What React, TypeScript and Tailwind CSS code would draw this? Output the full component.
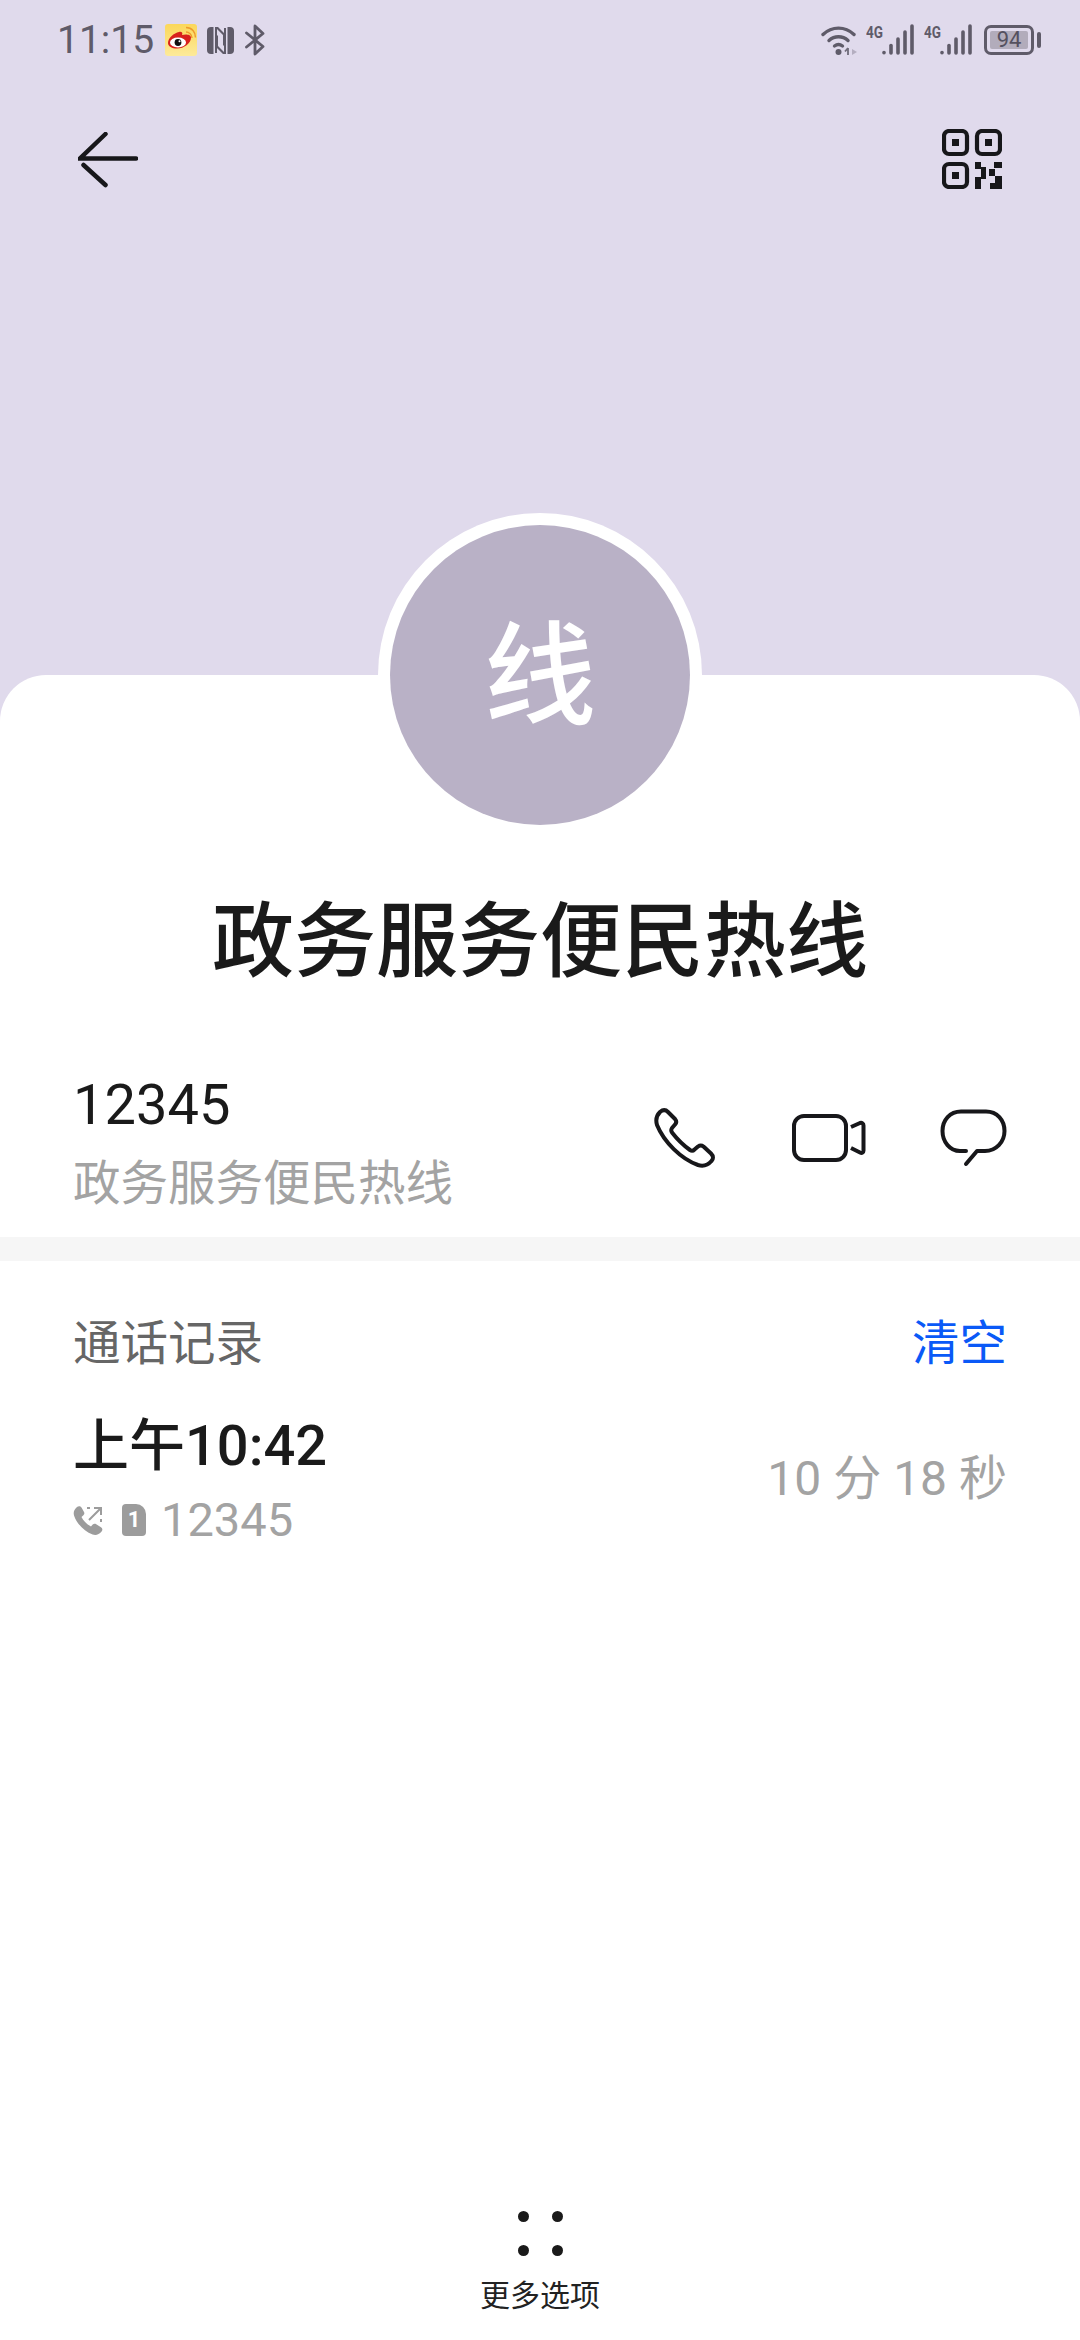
const Bars = () => (
  <svg width="50" height="32" viewBox="0 0 50 32" className="block">
    <text x="0" y="14" fontSize="16" fontWeight="700" fill="#5f5b69" fontFamily="Roboto, sans-serif" textLength="17" lengthAdjust="spacingAndGlyphs">4G</text>
    <g stroke="#5f5b69" strokeLinecap="round" strokeWidth="3.6" fill="none">
      <path d="M18 28.500v.2" />
      <path d="M25 21.500v7.500" />
      <path d="M32 15v14" />
      <path d="M39 8v21" />
      <path d="M46 2v27" />
    </g>
  </svg>
)

const StatusBar = () => (
  <div className="flex h-[76px] items-center justify-between pl-[57px] pr-[39px] pt-[4px]">
    <div className="flex items-center">
      <span className="text-[39px] leading-none text-[#5f5b69]">11:15</span>
      <svg width="32" height="32" viewBox="0 0 32 32" className="ml-[11px]">
        <defs>
          <linearGradient id="wb" x1="0" y1="0" x2="0" y2="1">
            <stop offset="0" stopColor="#fbd75a" />
            <stop offset="1" stopColor="#fdea9a" />
          </linearGradient>
        </defs>
        <rect width="32" height="32" rx="3" fill="url(#wb)" />
        <path d="M3 19c0-5 6-10 11-11 3-.6 4 1 3 3 3-1 9-1 9 2.500 0 6-7 11-14 11-5 0-9-2-9-5.500Z" fill="#d8201c" />
        <ellipse cx="13" cy="18.500" rx="8" ry="5" fill="#fff" />
        <circle cx="13" cy="18.500" r="3.400" fill="#111" />
        <circle cx="14.500" cy="17.300" r="1" fill="#fff" />
        <path d="M21 8c3 0 6 2.500 6 6M21 3.500c6 0 9.500 4.500 9.500 10" stroke="#ee9b2d" strokeWidth="1.500" fill="none" />
      </svg>
      <svg width="29" height="29" viewBox="0 0 29 29" className="ml-[9px]">
        <path d="M5 1h2.500v27H5a4 4 0 0 1-4-4V5a4 4 0 0 1 4-4Z" fill="#5f5b69" />
        <path d="M24 28h-2.500V1H24a4 4 0 0 1 4 4v19a4 4 0 0 1-4 4Z" fill="#5f5b69" />
        <path d="M9 1h3l7 7v13l-2-2V9l-6-6v24H9Z" fill="#5f5b69" />
        <path d="M20 28h-3l-7-7V8l2 2v10l6 6V2h2Z" fill="#5f5b69" />
      </svg>
      <svg width="20" height="32" viewBox="0 0 20 32" className="ml-[10px]">
        <path d="M1.500 9 18 22.500 10 30V2l8 7.500L1.500 23" stroke="#5f5b69" strokeWidth="2.800" fill="none" strokeLinejoin="round" strokeLinecap="round" />
      </svg>
    </div>
    <div className="flex items-center">
      <svg width="37" height="31" viewBox="0 0 37 31">
        <path d="M2 9.500C11 1 24 1 33 9.500" stroke="#5f5b69" strokeWidth="3.400" fill="none" strokeLinecap="round" />
        <path d="M8 15.500C13.500 10.500 21.500 10.500 27 15.500" stroke="#5f5b69" strokeWidth="3.400" fill="none" strokeLinecap="round" />
        <path d="M13.500 21c2.500-2 5.500-2 8 0" stroke="#5f5b69" strokeWidth="3.400" fill="none" strokeLinecap="round" />
        <circle cx="17.500" cy="27" r="3" fill="#5f5b69" />
        <path d="M27 23v7M24 26.500l3-3.500" stroke="#6f6b79" strokeWidth="1.800" fill="none" />
        <path d="M31 24l5 3-5 3Z" fill="#b4aec0" />
      </svg>
      <div className="ml-[8px]"><Bars /></div>
      <div className="ml-[8px]"><Bars /></div>
      <div className="ml-[10px] flex h-[30px] w-[50px] items-center justify-center rounded-[7px] border-[3px] border-[#5f5b69] p-[3px]">
        <div className="flex h-full w-full items-center justify-center rounded-[2px] bg-[#b2acbb] text-[22px] leading-none text-[#55515f]">94</div>
      </div>
      <div className="ml-[3px] h-[16px] w-[4px] rounded-full bg-[#5f5b69]" />
    </div>
  </div>
)

const TopBar = () => (
  <div className="mt-[53px] flex items-start justify-between pl-[78px] pr-[78px]">
    <svg width="60" height="56" viewBox="0 0 60 56" fill="none" stroke="#17171a" strokeWidth="4.500" strokeLinecap="round" className="mt-[3px]">
      <path d="M27.500 2 2 26.500H58" />
      <path d="M5.500 33 27.500 53" />
    </svg>
    <svg width="60" height="60" viewBox="0 0 60 60" fill="none">
      <g stroke="#17171a" strokeWidth="4.200">
        <rect x="2" y="2" width="23" height="23" rx="5" />
        <rect x="35" y="2" width="23" height="23" rx="5" />
        <rect x="2" y="35" width="23" height="23" rx="5" />
      </g>
      <g fill="#17171a">
        <rect x="10" y="10" width="7" height="7" />
        <rect x="43" y="10" width="7" height="7" />
        <rect x="10" y="43" width="7" height="7" />
        <path d="M33 33h6v5h5v12h-5v10h-6V48h6v-8h-6zM52 33h8v6h-8zM47 40h6v7h-6zM53 47h7v13H48v-6h5z" />
      </g>
    </svg>
  </div>
)

const PhoneIcon = () => (
  <svg width="62" height="60" viewBox="0 0 62 60" fill="none" stroke="#17171a" strokeWidth="4" strokeLinejoin="round">
    <path d="M6 4C9 1.500 12 2 14 4L21 11C23 13.500 22.500 15 21 16.500L18 20C17 21.500 17 23 18 24.500C23 31 29 37 36 42C37.500 43 39 43 40.500 41.500L44 38.500C46 37 47.500 37 49.500 38.500L57 45.500C59.500 48 59.500 51 57.500 53C54 57 49 58.500 44 57C27 51 10 34 3 17C1.500 12 2.500 7.500 6 4Z" />
  </svg>
)

const VideoIcon = () => (
  <svg width="74" height="48" viewBox="0 0 74 48" fill="none" stroke="#17171a" strokeWidth="4" strokeLinejoin="round">
    <rect x="2" y="2" width="52" height="44" rx="10" />
    <path d="M59 13 68 9C70 8.500 71.500 9.500 71.500 11.500V36.500C71.500 38.500 70 39.500 68 38.500L59 34" />
  </svg>
)

const ChatIcon = () => (
  <svg width="67" height="58" viewBox="0 0 67 58" fill="none" stroke="#17171a" strokeWidth="4" strokeLinecap="round" strokeLinejoin="round">
    <path d="M26 42H20C10 42 2.500 33 2.500 22C2.500 11 10 2.500 21 2.500H46C57 2.500 64.500 11 64.500 22C64.500 33 56 42 45 42H37L26 55" />
  </svg>
)

const OutgoingIcon = () => (
  <svg width="31" height="31" viewBox="0 0 31 31" fill="none">
    <path d="M4 2c1.500-1.200 3.500-1 4.500.6L11 7c.7 1.300.4 2.400-.6 3.300L8.500 12c2 4 5.500 7.500 9.500 9.500l1.700-1.900c1-1 2.200-1.200 3.500-.4l4.800 3c1.600 1.100 1.800 2.800.6 4.300-2.500 3-5.500 4-9 3C11.500 26.500 4 19 1.200 11 0 7.500 1 4.500 4 2Z" fill="#9c9c9c" />
    <path d="M16 15 27 4M21 3h7v7" stroke="#9c9c9c" strokeWidth="2" />
    <path d="M14 3h3M28 14v3" stroke="#9c9c9c" strokeWidth="2" />
  </svg>
)

const SimIcon = () => (
  <div className="ml-[18px] flex h-[32px] w-[24px] items-center justify-center rounded-[4px] rounded-tr-[10px] bg-[#9c9c9c] text-[22px] font-bold leading-none text-white">
    1
  </div>
)

export default function App() {
  return (
    <div className="flex h-[2340px] w-[1080px] flex-col overflow-hidden bg-[#e0daec] font-['Roboto','Noto_Sans_CJK_SC',sans-serif]">
      <StatusBar />
      <TopBar />

      <div className="mt-[486px] flex flex-1 flex-col rounded-t-[46px] bg-white">
        <div className="mx-auto mt-[-162px] flex h-[324px] w-[324px] items-center justify-center rounded-full bg-white">
          <div className="flex h-[300px] w-[300px] items-center justify-center rounded-full bg-[#b9b1c6] pt-[6px] text-[112px] font-medium leading-none text-white">
            线
          </div>
        </div>

        <div className="mt-[45px] text-center text-[82px] font-medium leading-[120px] text-[#1a1a1a]">
          政务服务便民热线
        </div>

        <div className="mt-[67px] flex h-[160px] items-start justify-between pl-[73px] pr-[73px]">
          <div>
            <div className="text-[56px] leading-[72px] text-[#1a1a1a]">12345</div>
            <div className="mt-[10px] text-[47.500px] leading-[66px] text-[#a3a3a3]">政务服务便民热线</div>
          </div>
          <div className="mt-[39px] flex items-center">
            <PhoneIcon />
            <div className="ml-[76px]"><VideoIcon /></div>
            <div className="ml-[74px]"><ChatIcon /></div>
          </div>
        </div>

        <div className="mt-[8px] h-[24px] bg-[#f6f6f6]" />

        <div className="mt-[53px] flex items-center justify-between pl-[73px] pr-[73px] text-[47.500px] leading-[60px]">
          <span className="text-[#666666]">通话记录</span>
          <span className="text-[#0a59f7]">清空</span>
        </div>

        <div className="mt-[36px] flex items-center justify-between pl-[73px] pr-[73px]">
          <div>
            <div className="text-[56px] font-medium leading-[72px] text-[#1a1a1a]">上午10:42</div>
            <div className="mt-[10px] flex items-center">
              <OutgoingIcon />
              <SimIcon />
              <span className="ml-[15px] text-[47px] leading-[56px] text-[#a3a3a3]">12345</span>
            </div>
          </div>
          <div className="text-[48px] text-[#a3a3a3]">10 分 18 秒</div>
        </div>

        <div className="mt-auto flex flex-col items-center pb-[23px]">
          <div className="grid grid-cols-2 gap-x-[23px] gap-y-[23px]">
            <div className="h-[11px] w-[11px] rounded-full bg-[#1a1a1a]" />
            <div className="h-[11px] w-[11px] rounded-full bg-[#1a1a1a]" />
            <div className="h-[11px] w-[11px] rounded-full bg-[#1a1a1a]" />
            <div className="h-[11px] w-[11px] rounded-full bg-[#1a1a1a]" />
          </div>
          <div className="mt-[19px] text-[30px] leading-[42px] text-[#222222]">更多选项</div>
        </div>
      </div>
    </div>
  )
}
